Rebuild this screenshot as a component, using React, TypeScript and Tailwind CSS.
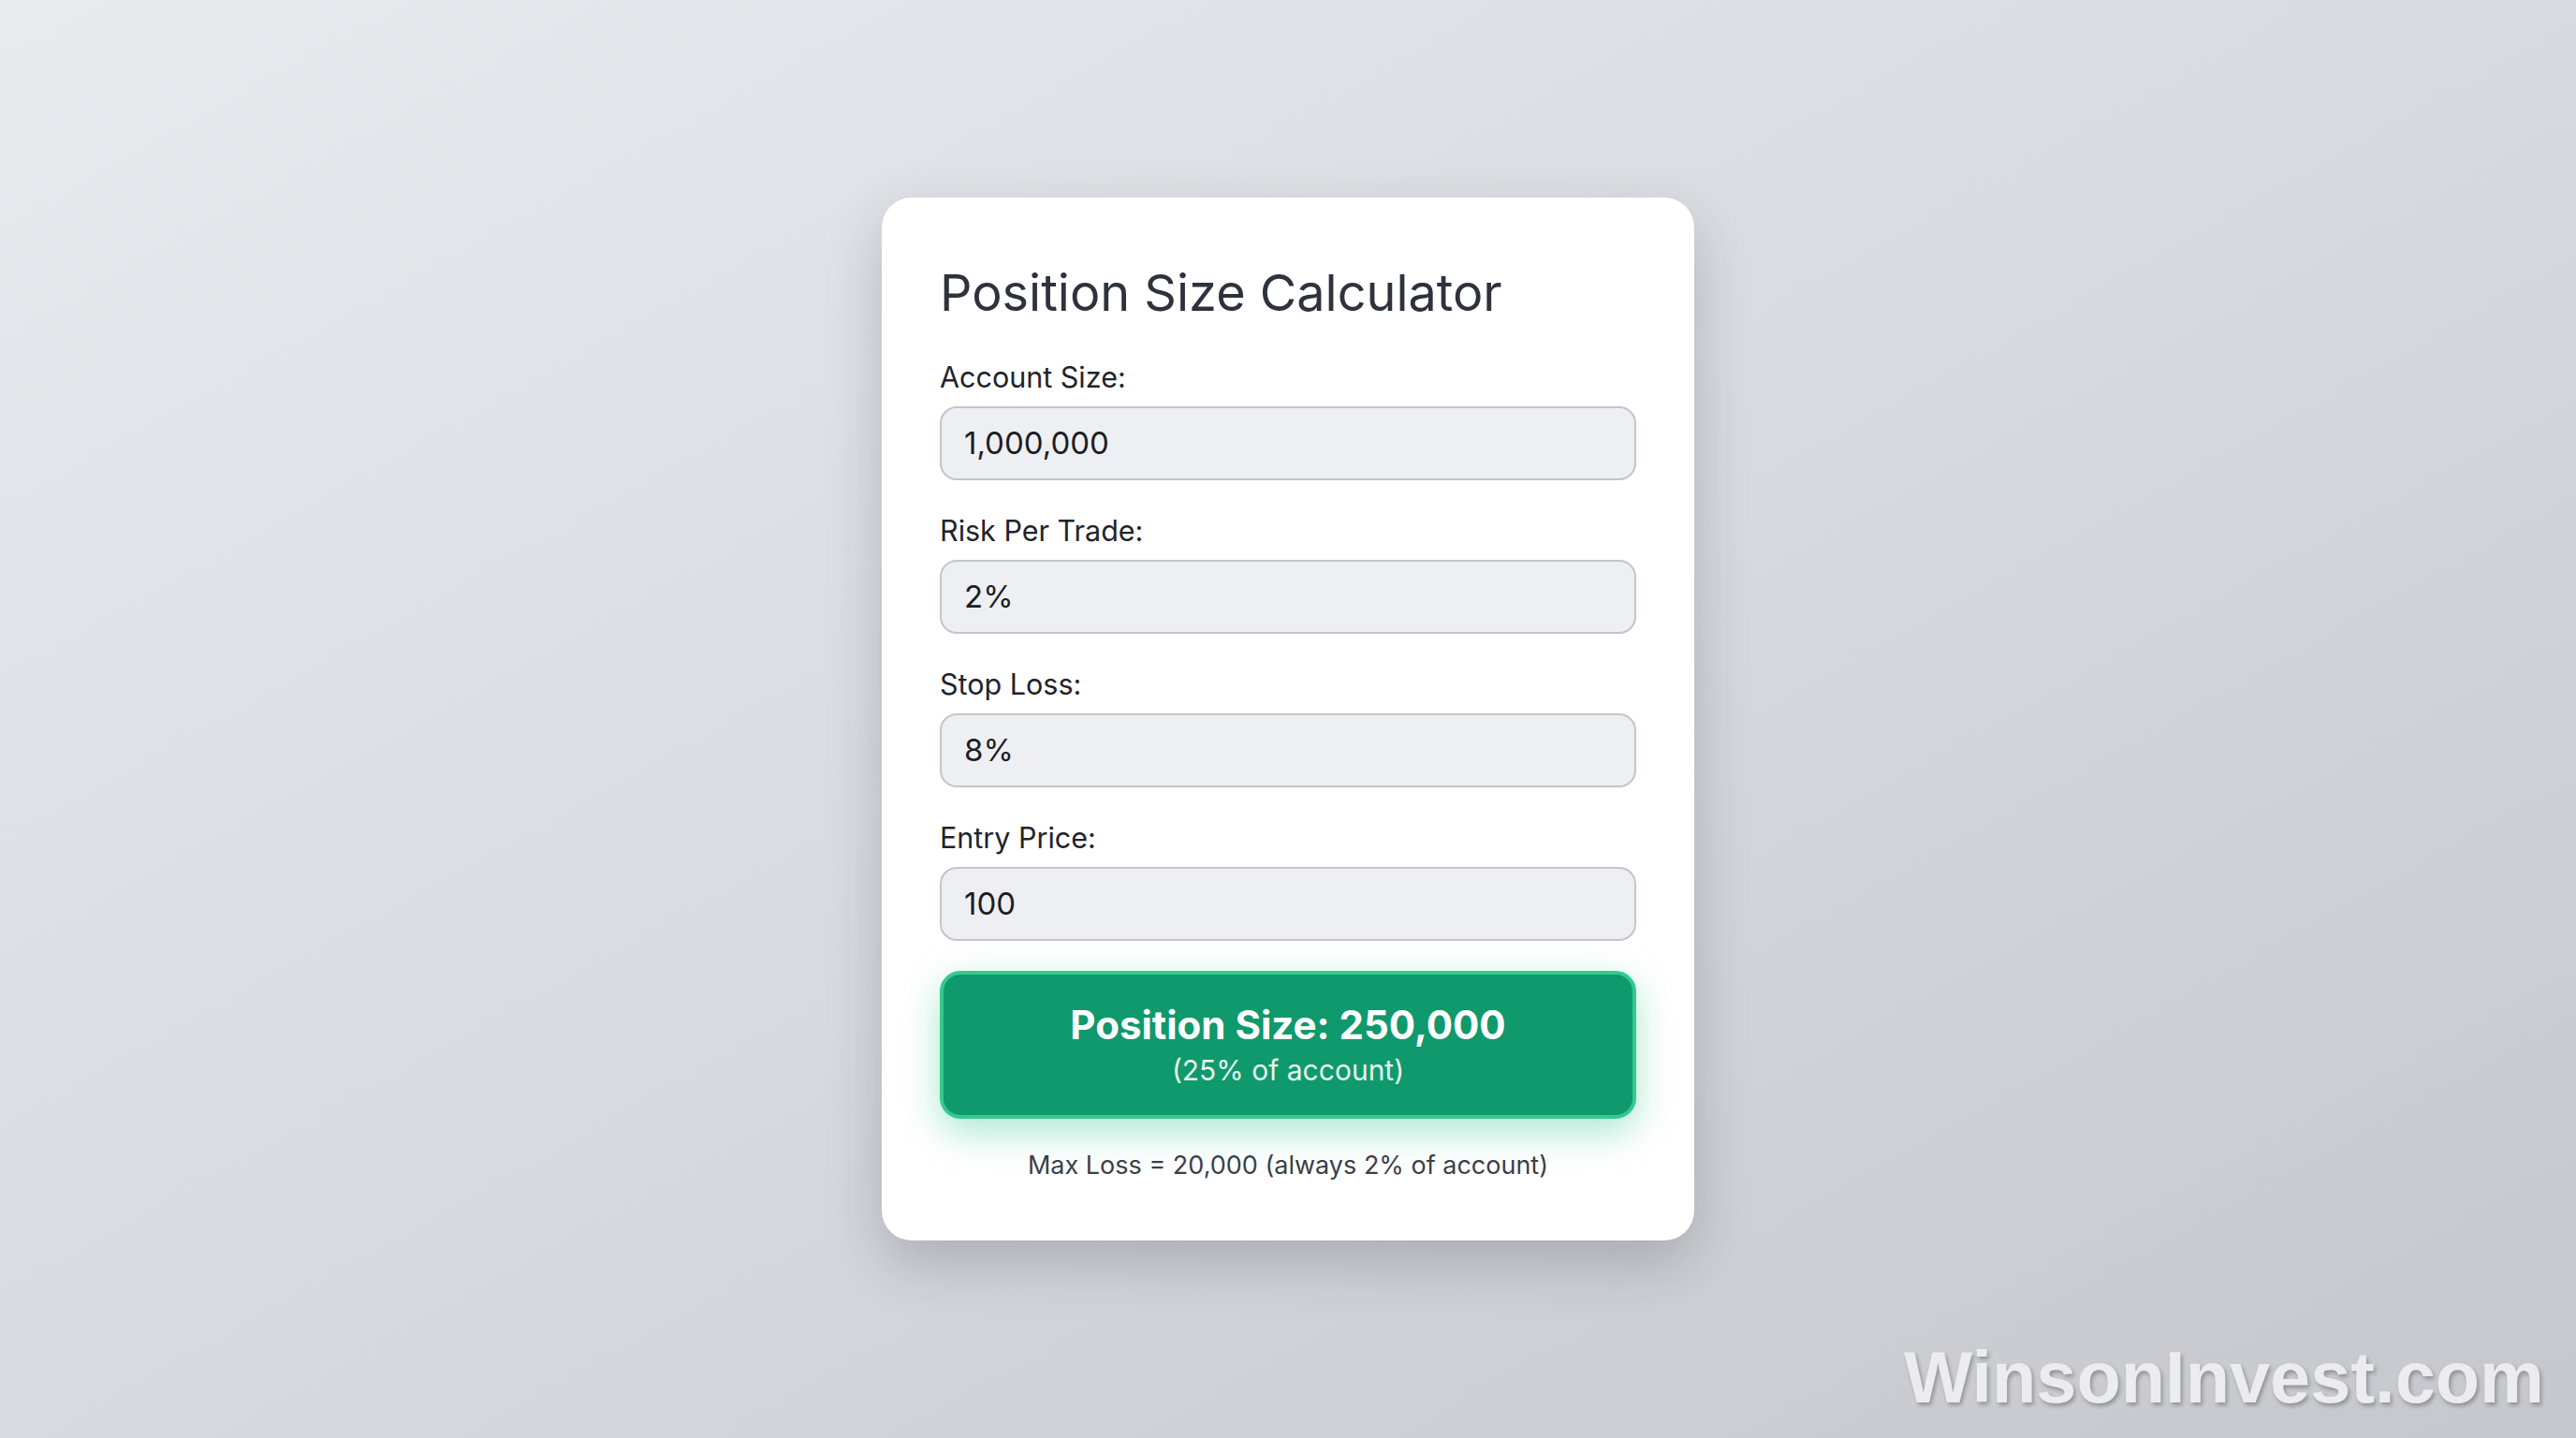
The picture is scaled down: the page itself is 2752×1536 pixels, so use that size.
const fields = [
  { label: "Account Size:", value: "1,000,000" },
  { label: "Risk Per Trade:", value: "2%" },
  { label: "Stop Loss:", value: "8%" },
  { label: "Entry Price:", value: "100" },
];

function Field({ label, value }: { label: string; value: string }) {
  return (
    <div className="flex flex-col">
      <label className="text-[30.5px] leading-[40px] text-[#1f232c]">{label}</label>
      <div className="mt-[11px] h-[79px] rounded-[18px] border-2 border-[#c4c5ca] bg-[#eeeff2] pl-[24px] flex items-center text-[33px] text-[#1b1e25]">
        {value}
      </div>
    </div>
  );
}

export default function App() {
  return (
    <div
      className="relative w-full h-[1536px] overflow-hidden flex items-center justify-center bg-gradient-to-br from-[#e9eaee] via-[#d9dadf] to-[#c6c7cc]"
      style={{ fontFamily: "Inter, 'Noto Sans', sans-serif" }}
    >
      <div className="w-[868px] bg-white rounded-[32px] px-[62px] pt-[70px] pb-[62px] shadow-[0_24px_60px_rgba(30,35,50,0.22)]">
        <h1 className="text-[54px] leading-[64px] font-normal text-[#2d323d]">Position Size Calculator</h1>

        <div className="mt-[38px] flex flex-col gap-[34px]">
          {fields.map((f) => (
            <Field key={f.label} label={f.label} value={f.value} />
          ))}
        </div>

        <div className="mt-[32px] h-[158px] rounded-[22px] border-4 border-[#35c98d] bg-[#0f996c] flex flex-col items-center justify-center text-white shadow-[0_14px_40px_rgba(16,185,129,0.35)]">
          <div className="text-[42px] leading-[50px] font-bold">Position Size: 250,000</div>
          <div className="mt-[3px] text-[30px] leading-[40px] text-[#e6f7ef]">(25% of account)</div>
        </div>

        <p className="mt-[32px] text-center text-[27px] leading-[36px] text-[#3a3f4a]">
          Max Loss = 20,000 (always 2% of account)
        </p>
      </div>

      <div
        className="absolute right-[34px] bottom-[26px] text-[77.5px] leading-none font-bold text-[#ececee] [text-shadow:2px_3px_4px_rgba(0,0,0,0.28)]"
        style={{ fontFamily: "'Liberation Sans', Arial, sans-serif" }}
      >
        WinsonInvest.com
      </div>
    </div>
  );
}
